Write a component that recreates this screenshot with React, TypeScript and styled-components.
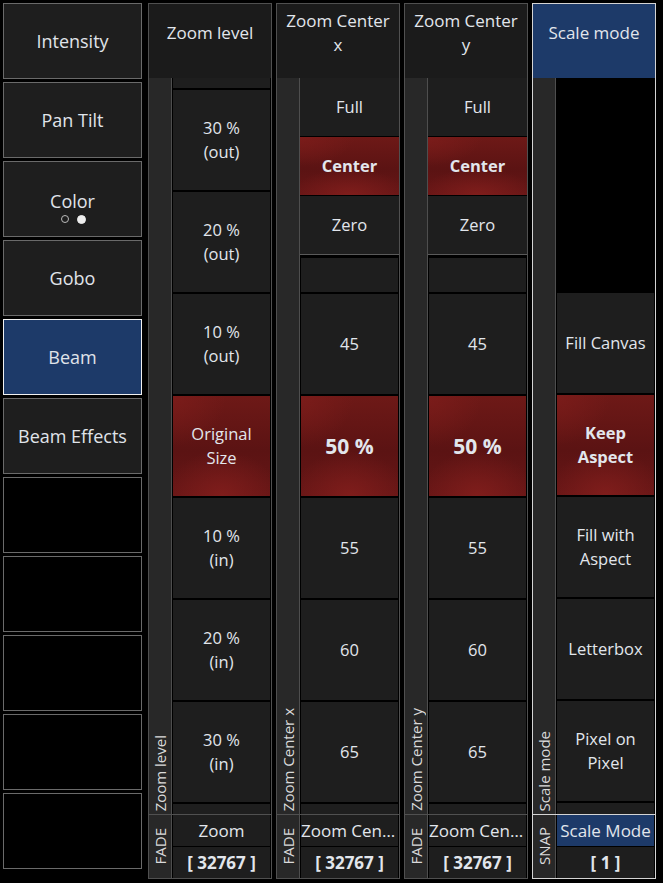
import React from 'react'
import styled, { createGlobalStyle, css } from 'styled-components'

type CellData = {
  lines?: string[]
  active?: boolean
  bold?: boolean
  big?: boolean
  h?: number
}

type ColumnData = {
  title: string
  label: string
  mode: 'FADE' | 'SNAP'
  name: string
  value: string
  selected?: boolean
  presets?: CellData[]
  spacer?: number
  cells: CellData[]
}

const sideButtons = [
  { label: 'Intensity' },
  { label: 'Pan Tilt' },
  { label: 'Color', dots: true },
  { label: 'Gobo' },
  { label: 'Beam', active: true },
  { label: 'Beam Effects' },
  { label: '' },
  { label: '' },
  { label: '' },
  { label: '' },
  { label: '' },
]

const centerPresets: CellData[] = [
  { lines: ['Full'] },
  { lines: ['Center'], active: true, bold: true },
  { lines: ['Zero'] },
]

const centerCells: CellData[] = [
  { h: 34 },
  { lines: ['45'] },
  { lines: ['50 %'], active: true, bold: true, big: true },
  { lines: ['55'] },
  { lines: ['60'] },
  { lines: ['65'] },
  { h: 11 },
]

const columns: ColumnData[] = [
  {
    title: 'Zoom level',
    label: 'Zoom level',
    mode: 'FADE',
    name: 'Zoom',
    value: '[ 32767 ]',
    cells: [
      { h: 10 },
      { lines: ['30 %', '(out)'] },
      { lines: ['20 %', '(out)'] },
      { lines: ['10 %', '(out)'] },
      { lines: ['Original', 'Size'], active: true },
      { lines: ['10 %', '(in)'] },
      { lines: ['20 %', '(in)'] },
      { lines: ['30 %', '(in)'] },
      { h: 11 },
    ],
  },
  {
    title: 'Zoom Center x',
    label: 'Zoom Center x',
    mode: 'FADE',
    name: 'Zoom Center x',
    value: '[ 32767 ]',
    presets: centerPresets,
    cells: centerCells,
  },
  {
    title: 'Zoom Center y',
    label: 'Zoom Center y',
    mode: 'FADE',
    name: 'Zoom Center y',
    value: '[ 32767 ]',
    presets: centerPresets,
    cells: centerCells,
  },
  {
    title: 'Scale mode',
    label: 'Scale mode',
    mode: 'SNAP',
    name: 'Scale Mode',
    value: '[ 1 ]',
    selected: true,
    spacer: 213,
    cells: [
      { lines: ['Fill Canvas'] },
      { lines: ['Keep', 'Aspect'], active: true, bold: true },
      { lines: ['Fill with', 'Aspect'] },
      { lines: ['Letterbox'] },
      { lines: ['Pixel on', 'Pixel'] },
      { h: 11 },
    ],
  },
]

const GlobalStyle = createGlobalStyle`
  html, body {
    margin: 0;
    background: #000;
  }
  body {
    font-family: "Open Sans", "Noto Sans", sans-serif;
    color: #e2e2e2;
  }
`

const BLUE = '#1d3a69'

const redFill = css`
  background:
    radial-gradient(ellipse 60% 45% at 50% 100%, rgba(130, 30, 28, 0.9), rgba(130, 30, 28, 0) 100%),
    radial-gradient(ellipse 55% 50% at 0% 0%, rgba(124, 28, 26, 0.9), rgba(124, 28, 26, 0) 100%),
    linear-gradient(180deg, #6e1917 0%, #5b1313 55%, #671616 100%);
`

const Page = styled.div`
  display: flex;
  gap: 6px;
  padding: 3px;
  width: 663px;
  height: 883px;
  box-sizing: border-box;
`

const Sidebar = styled.div`
  display: flex;
  flex-direction: column;
  gap: 3px;
  width: 139px;
  flex-shrink: 0;
`

const SideButton = styled.div<{ $active?: boolean; $empty?: boolean; $dots?: boolean }>`
  height: 76px;
  box-sizing: border-box;
  padding-top: ${p => (p.$dots ? 14 : 0)}px;
  border: 1px solid ${p => (p.$active ? '#f0f0f0' : '#6a6a6a')};
  background: ${p => (p.$active ? BLUE : p.$empty ? '#000' : '#1e1e1e')};
  display: flex;
  flex-direction: column;
  align-items: center;
  justify-content: center;
  font-size: 18px;
  line-height: 24px;
  color: #e0e4ea;
`

const Dots = styled.div`
  display: flex;
  gap: 8px;
  align-items: center;
  margin-top: 2px;
  margin-left: 1px;
`

const Dot = styled.span<{ $filled?: boolean }>`
  width: ${p => (p.$filled ? 9 : 8)}px;
  height: ${p => (p.$filled ? 9 : 8)}px;
  box-sizing: border-box;
  border-radius: 50%;
  border: 1px solid ${p => (p.$filled ? '#eee' : '#bbb')};
  background: ${p => (p.$filled ? '#eee' : 'transparent')};
`

const Columns = styled.div`
  display: flex;
  gap: 4px;
`

const Column = styled.div<{ $selected?: boolean }>`
  width: 124px;
  height: 876px;
  box-sizing: border-box;
  border: 1px solid ${p => (p.$selected ? '#d4d4d4' : '#505050')};
  display: flex;
  flex-direction: column;
  background: #000;
`

const Header = styled.div<{ $selected?: boolean }>`
  height: 74px;
  box-sizing: border-box;
  flex-shrink: 0;
  padding: 0 8px 16px;
  background: ${p => (p.$selected ? BLUE : '#1b1b1b')};
  display: flex;
  align-items: center;
  justify-content: center;
  text-align: center;
  font-size: 17px;
  line-height: 24px;
  color: #e2e6ec;
`

const Body = styled.div`
  flex: 1;
  display: flex;
  min-height: 0;
`

const FadeBar = styled.div`
  width: 23px;
  flex-shrink: 0;
  box-sizing: border-box;
  background: #282828;
  border-right: 1px solid #4e4e4e;
  display: flex;
  flex-direction: column;
  justify-content: flex-end;
  align-items: center;
  padding-bottom: 3px;
`

const VerticalLabel = styled.span`
  writing-mode: vertical-rl;
  transform: rotate(180deg);
  font-size: 15px;
  line-height: 18px;
  color: #dadada;
  white-space: nowrap;
`

const List = styled.div`
  flex: 1;
  display: flex;
  flex-direction: column;
  padding: 0 1px;
  overflow: hidden;
`

const Presets = styled.div`
  display: flex;
  flex-direction: column;
  gap: 1px;
  margin: 0 -1px 3px;
  border-bottom: 1px solid #5a5a5a;
`

const Cells = styled.div`
  display: flex;
  flex-direction: column;
  gap: 2px;
`

const Spacer = styled.div<{ $h: number }>`
  height: ${p => p.$h}px;
  flex-shrink: 0;
  margin-bottom: 2px;
`

const Cell = styled.div<{ $active?: boolean; $bold?: boolean; $big?: boolean; $h: number }>`
  height: ${p => p.$h}px;
  flex-shrink: 0;
  display: flex;
  flex-direction: column;
  align-items: center;
  justify-content: center;
  text-align: center;
  font-size: ${p => (p.$big ? 21 : 16.5)}px;
  font-weight: ${p => (p.$bold ? 700 : 400)};
  line-height: 24px;
  color: #e2e6ec;
  background: #1e1e1e;
  ${p => p.$active && redFill}
`

const Footer = styled.div<{ $selected?: boolean }>`
  height: 63px;
  flex-shrink: 0;
  display: flex;
  border-top: 1px solid ${p => (p.$selected ? '#d4d4d4' : '#505050')};
`

const FooterMode = styled.div`
  width: 23px;
  flex-shrink: 0;
  box-sizing: border-box;
  background: #282828;
  border-right: 1px solid #4e4e4e;
  display: flex;
  align-items: center;
  justify-content: center;
`

const FooterCells = styled.div`
  flex: 1;
  min-width: 0;
  display: flex;
  flex-direction: column;
  gap: 1px;
  padding: 0 1px;
`

const FooterName = styled.div<{ $selected?: boolean }>`
  height: 31px;
  background: ${p => (p.$selected ? BLUE : '#1e1e1e')};
  font-size: 17px;
  line-height: 31px;
  text-align: center;
  white-space: nowrap;
  overflow: hidden;
  text-overflow: ellipsis;
  color: #e2e6ec;
`

const FooterValue = styled.div`
  flex: 1;
  background: #1e1e1e;
  font-size: 17px;
  font-weight: 700;
  display: flex;
  align-items: center;
  justify-content: center;
  color: #e2e6ec;
`

const renderCell = (c: CellData, i: number, h = 100) => (
  <Cell key={i} $active={c.active} $bold={c.bold} $big={c.big} $h={c.h ?? h}>
    {c.lines?.map(l => <span key={l}>{l}</span>)}
  </Cell>
)

export default function App() {
  return (
    <>
      <GlobalStyle />
      <Page>
        <Sidebar>
          {sideButtons.map((b, i) => (
            <SideButton key={i} $active={b.active} $empty={!b.label} $dots={b.dots}>
              {b.label}
              {b.dots && (
                <Dots>
                  <Dot />
                  <Dot $filled />
                </Dots>
              )}
            </SideButton>
          ))}
        </Sidebar>
        <Columns>
          {columns.map(col => (
            <Column key={col.title} $selected={col.selected}>
              <Header $selected={col.selected}>{col.title}</Header>
              <Body>
                <FadeBar>
                  <VerticalLabel>{col.label}</VerticalLabel>
                </FadeBar>
                <List>
                  {col.presets && <Presets>{col.presets.map((c, i) => renderCell(c, i, 58))}</Presets>}
                  {col.spacer && <Spacer $h={col.spacer} />}
                  <Cells>{col.cells.map((c, i) => renderCell(c, i))}</Cells>
                </List>
              </Body>
              <Footer $selected={col.selected}>
                <FooterMode>
                  <VerticalLabel>{col.mode}</VerticalLabel>
                </FooterMode>
                <FooterCells>
                  <FooterName $selected={col.selected}>{col.name}</FooterName>
                  <FooterValue>{col.value}</FooterValue>
                </FooterCells>
              </Footer>
            </Column>
          ))}
        </Columns>
      </Page>
    </>
  )
}
